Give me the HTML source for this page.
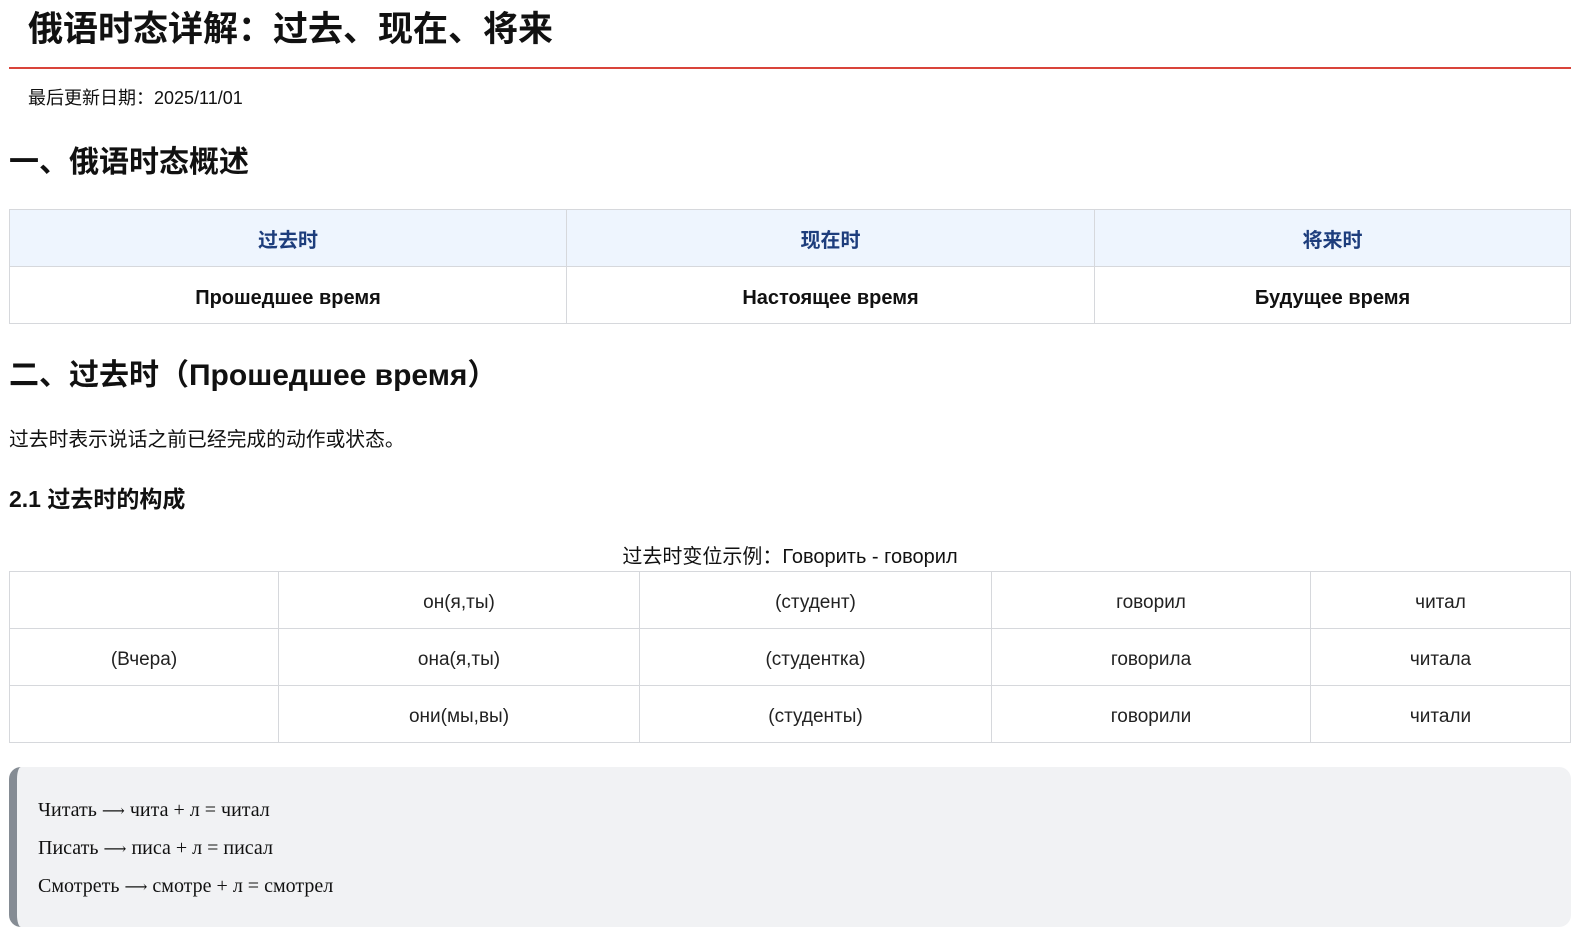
<!DOCTYPE html>
<html><head><meta charset="utf-8"><style>
body{margin:0;padding:0;font-family:"Liberation Sans","Noto Sans CJK SC",sans-serif;color:#111;background:#fff}
.t{position:absolute}
h1{position:absolute;left:28px;top:8px;margin:0;font-size:35px;font-weight:bold;line-height:44px}
.red{position:absolute;left:9px;top:67px;width:1562px;height:2px;background:#d9443a}
table{position:absolute;left:9px;width:1562px;border-collapse:collapse;table-layout:fixed}
td{border:1px solid #d6d8dc;text-align:center;height:56px;padding:0;line-height:56px}
td span{position:relative;top:3px}
</style></head><body>
<h1>俄语时态详解：过去、现在、将来</h1>
<div class="red"></div>
<div class="t" style="left:28px;top:87px;font-size:18px;line-height:22px">最后更新日期：2025/11/01</div>
<div class="t" style="left:9px;top:145px;font-size:30px;font-weight:bold;line-height:36px">一、俄语时态概述</div>
<table style="top:209px;font-size:20px">
<colgroup><col style="width:557px"><col style="width:528px"><col></colgroup>
<tr style="background:#eef5fe;color:#1d3d7c;font-weight:bold"><td><span>过去时</span></td><td><span>现在时</span></td><td><span>将来时</span></td></tr>
<tr style="font-weight:bold"><td><span>Прошедшее время</span></td><td><span>Настоящее время</span></td><td><span>Будущее время</span></td></tr>
</table>
<div class="t" style="left:9px;top:357px;font-size:30px;font-weight:bold;line-height:38px">二、过去时（Прошедшее время）</div>
<div class="t" style="left:9px;top:427px;font-size:19.8px;line-height:26px">过去时表示说话之前已经完成的动作或状态。</div>
<div class="t" style="left:9px;top:485px;font-size:23px;font-weight:bold;line-height:28px">2.1 过去时的构成</div>
<div class="t" style="left:9px;width:1562px;text-align:center;top:544px;font-size:20px;line-height:26px">过去时变位示例：Говорить - говорил</div>
<table style="top:571px;font-size:19px;color:#222">
<colgroup><col style="width:269px"><col style="width:361px"><col style="width:352px"><col style="width:319px"><col></colgroup>
<tr><td></td><td><span>он(я,ты)</span></td><td><span>(студент)</span></td><td><span>говорил</span></td><td><span>читал</span></td></tr>
<tr><td><span>(Вчера)</span></td><td><span>она(я,ты)</span></td><td><span>(студентка)</span></td><td><span>говорила</span></td><td><span>читала</span></td></tr>
<tr><td></td><td><span>они(мы,вы)</span></td><td><span>(студенты)</span></td><td><span>говорили</span></td><td><span>читали</span></td></tr>
</table>
<div class="t" style="left:9px;top:767px;width:1554px;height:160px;background:#f1f2f4;border-left:8px solid #858c94;border-radius:12px;font-family:'Liberation Serif','DejaVu Serif',serif;font-size:20px">
<div class="t" style="left:21px;top:31px;line-height:24px">Читать <span style="font-family:'DejaVu Serif';font-size:16px">⟶</span> чита + л = читал</div>
<div class="t" style="left:21px;top:69px;line-height:24px">Писать <span style="font-family:'DejaVu Serif';font-size:16px">⟶</span> писа + л = писал</div>
<div class="t" style="left:21px;top:107px;line-height:24px">Смотреть <span style="font-family:'DejaVu Serif';font-size:16px">⟶</span> смотре + л = смотрел</div>
</div>
</body></html>
